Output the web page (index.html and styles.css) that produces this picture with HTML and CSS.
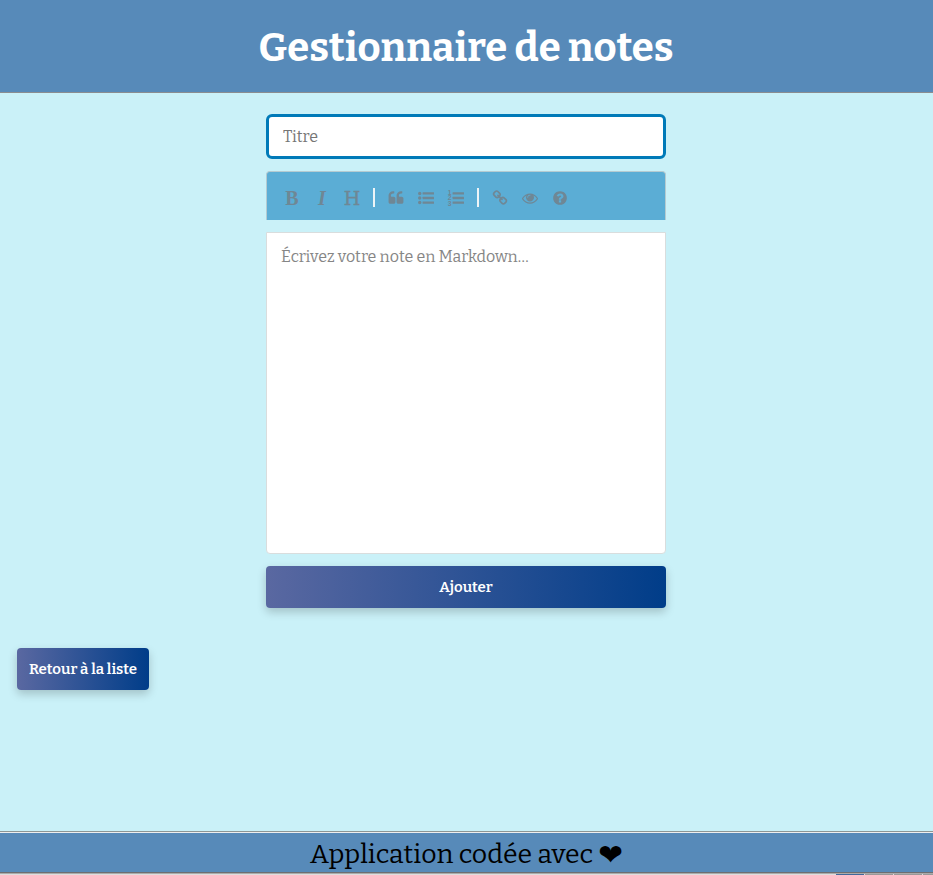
FILE: index.html
```html
<!DOCTYPE html>
<html lang="fr">
<head>
<meta charset="utf-8">
<title>Gestionnaire de notes</title>
<link rel="stylesheet" href="styles.css">
</head>
<body>
<header class="header"><h1>Gestionnaire de notes</h1></header>
<main class="main">
  <form class="form">
    <input class="title-input" type="text" placeholder="Titre">
    <div class="toolbar">
      <span class="tool bold">B</span>
      <span class="tool italic">I</span>
      <span class="tool heading">H</span>
      <i class="separator"></i>
      <span class="tool"><svg viewBox="0 0 1792 1792"><path d="M832 960v384q0 80-56 136t-136 56h-384q-80 0-136-56t-56-136v-704q0-104 40.500-198.500t109.500-163.500 163.500-109.500 198.500-40.500h64q26 0 45 19t19 45v128q0 26-19 45t-45 19h-64q-106 0-181 75t-75 181v32q0 40 28 68t68 28h224q80 0 136 56t56 136zm896 0v384q0 80-56 136t-136 56h-384q-80 0-136-56t-56-136v-704q0-104 40.500-198.500t109.500-163.500 163.500-109.500 198.500-40.500h64q26 0 45 19t19 45v128q0 26-19 45t-45 19h-64q-106 0-181 75t-75 181v32q0 40 28 68t68 28h224q80 0 136 56t56 136z"/></svg></span>
      <span class="tool"><svg viewBox="0 0 1792 1792"><circle cx="192" cy="384" r="192"/><circle cx="192" cy="896" r="192"/><circle cx="192" cy="1408" r="192"/><rect x="512" y="256" width="1280" height="256" rx="32"/><rect x="512" y="768" width="1280" height="256" rx="32"/><rect x="512" y="1280" width="1280" height="256" rx="32"/></svg></span>
      <span class="tool"><svg viewBox="0 0 1792 1792"><text x="-30" y="520">1</text><text x="-30" y="1140">2</text><text x="-30" y="1760">3</text><rect x="512" y="256" width="1280" height="256" rx="32"/><rect x="512" y="768" width="1280" height="256" rx="32"/><rect x="512" y="1280" width="1280" height="256" rx="32"/></svg></span>
      <i class="separator"></i>
      <span class="tool"><svg viewBox="0 0 1792 1792"><path d="M1520 1216q0-40-28-68l-208-208q-28-28-68-28-42 0-72 32 3 3 19 18.500t21.500 21.500 15 19 13 25.500 3.500 27.500q0 40-28 68t-68 28q-15 0-27.500-3.500t-25.500-13-19-15-21.500-21.500-18.500-19q-33 31-33 73 0 40 28 68l206 207q27 27 68 27 40 0 68-26l147-146q28-28 28-67zm-703-705q0-40-28-68l-206-207q-28-28-68-28-39 0-68 27l-147 146q-28 28-28 67 0 40 28 68l208 208q27 27 68 27 42 0 72-31-3-3-19-18.500t-21.500-21.500-15-19-13-25.500-3.500-27.500q0-40 28-68t68-28q15 0 27.500 3.500t25.500 13 19 15 21.500 21.500 18.500 19q33-31 33-73zm895 705q0 120-85 203l-147 146q-83 83-203 83-121 0-204-85l-206-207q-83-83-83-203 0-123 88-209l-88-88q-86 88-208 88-120 0-204-84l-208-208q-84-84-84-204t85-203l147-146q83-83 203-83 121 0 204 85l206 207q83 83 83 203 0 123-88 209l88 88q86-88 208-88 120 0 204 84l208 208q84 84 84 204z"/></svg></span>
      <span class="tool"><svg viewBox="0 0 1792 1792"><path d="M1664 960q-152-236-381-353 61 104 61 225 0 185-131.500 316.500t-316.500 131.500-316.500-131.500-131.500-316.500q0-121 61-225-229 117-381 353 133 205 333.500 326.500t434.500 121.500 434.500-121.500 333.500-326.500zm-720-384q0-20-14-34t-34-14q-125 0-214.500 89.500t-89.500 214.500q0 20 14 34t34 14 34-14 14-34q0-86 61-147t147-61q20 0 34-14t14-34zm848 384q0 34-20 69-140 230-376.500 368.500t-499.500 138.500-499.500-139-376.500-368q-20-35-20-69t20-69q140-229 376.500-368t499.500-139 499.500 139 376.500 368q20 35 20 69z"/></svg></span>
      <span class="tool"><svg viewBox="0 0 1792 1792"><path d="M1024 1376v-192q0-14-9-23t-23-9h-192q-14 0-23 9t-9 23v192q0 14 9 23t23 9h192q14 0 23-9t9-23zm256-672q0-88-55.500-163t-138.500-116-170-41q-243 0-371 213-15 24 8 42l132 100q7 6 19 6 16 0 25-12 53-68 86-92 34-24 86-24 48 0 85.500 26t37.500 59q0 38-20 61t-68 45q-63 28-115.500 86.500t-52.500 125.500v36q0 14 9 23t23 9h192q14 0 23-9t9-23q0-19 21.500-49.500t54.500-49.500q32-18 49-28.500t46-35 44.500-48 28-60.500 12.500-81zm384 192q0 209-103 385.500t-279.500 279.500-385.500 103-385.500-103-279.500-279.500-103-385.500 103-385.500 279.500-279.500 385.500-103 385.500 103 279.500 279.500 103 385.500z"/></svg></span>
    </div>
    <textarea class="editor" placeholder="Écrivez votre note en Markdown…"></textarea>
    <button class="button submit" type="button">Ajouter</button>
  </form>
  <a class="button back">Retour à la liste</a>
</main>
<footer class="footer"><span class="credit">Application codée avec</span><span class="heart">❤</span></footer>
<div class="strip"><i class="active"></i><i></i><i></i><i></i></div>
</body>
</html>
```

FILE: styles.css
```css
* { box-sizing: border-box; }
body {
  margin: 0;
  height: 875px;
  overflow: hidden;
  display: flex;
  flex-direction: column;
  background: #caf1f8;
  font-family: Bitter, "DejaVu Serif", serif;
}
.header {
  height: 93px;
  flex: none;
  display: flex;
  justify-content: center;
  background: #578ab9;
  border-bottom: 1px solid #8b8d90;
}
h1 {
  margin: 0 1px 0 0;
  color: #fff;
  font-size: 40px;
  line-height: 96px;
  white-space: nowrap;
}
.main { flex: 1; padding-top: 21px; }
.form {
  width: 400px;
  margin-left: 266px;
  display: flex;
  flex-direction: column;
}
.title-input {
  height: 45px;
  padding: 0 14px;
  border: 3px solid #007ab8;
  border-radius: 6px;
  outline: 0;
  background: #fff;
  font: inherit;
  font-size: 16px;
}
::placeholder { color: #757575; opacity: 1; }
.editor::placeholder { color: #858585; }
.toolbar {
  height: 49px;
  margin-top: 12px;
  padding: 3px 0 0 10px;
  display: flex;
  align-items: center;
  background: #5badd5;
  border: 1px solid #b5cbd1;
  border-bottom: 0;
  border-radius: 4px 4px 0 0;
}
.tool {
  width: 30px;
  height: 30px;
  display: flex;
  align-items: center;
  justify-content: center;
  color: #6f8795;
  font: 20px/28px "Liberation Serif", serif;
}
.bold { font-weight: bold; }
.italic { font-style: italic; font-weight: bold; }
.heading { font: 19px/30px "DejaVu Serif", serif; -webkit-text-stroke: 0.4px #6f8795; }
.tool svg { width: 16px; height: 16px; fill: #6f8795; overflow: visible; }
.tool text { font: bold 760px "Liberation Sans", sans-serif; }
.separator {
  width: 2px;
  height: 19px;
  margin: 0 6px;
  background: #edf4f7;
}
.editor {
  height: 322px;
  margin-top: 12px;
  padding: 14px 14px;
  border: 1px solid #d9dddd;
  border-radius: 0 0 4px 4px;
  outline: 0;
  resize: none;
  background: #fff;
  font: inherit;
  font-size: 16px;
  line-height: 20px;
}
.button {
  height: 42px;
  display: block;
  border: 0;
  border-radius: 4px;
  color: #fff;
  background: linear-gradient(90deg, #5a68a1, #003d89);
  box-shadow: 0 4px 10px rgba(0, 0, 0, .2);
  font-family: inherit;
  font-weight: 600;
  font-size: 15px;
  line-height: 42px;
  text-align: center;
  padding: 0;
  white-space: nowrap;
}
.submit { margin-top: 12px; }
.back { width: 132px; margin: 40px 0 0 17px; }
.footer {
  height: 42px;
  flex: none;
  display: flex;
  justify-content: center;
  gap: 5px;
  background: #578ab9;
  border-top: 1px solid #8d9695;
  border-bottom: 1px solid #6d6e71;
  box-shadow: inset 0 1px #eeeeee;
  color: #000;
  font-size: 26.67px;
  line-height: 44px;
}
.heart { font: 29.500px/46px "DejaVu Sans", sans-serif; }
.strip {
  height: 2px;
  flex: none;
  display: flex;
  justify-content: flex-end;
  gap: 1px;
  background: #dedede;
  border-top: 1px solid #aaa;
}
.strip i { width: 28px; background: #999; }
.strip .active { background: #40699b; }
.strip i:last-child { width: 10px; }
```
